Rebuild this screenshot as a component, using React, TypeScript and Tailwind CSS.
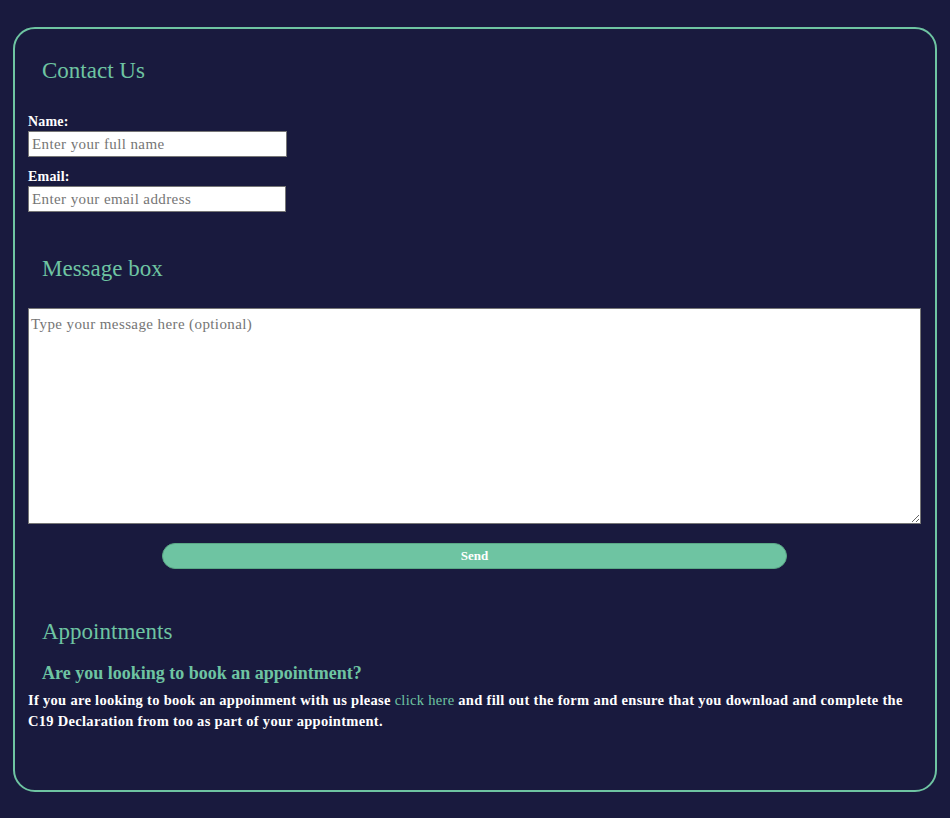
import React from "react";

export default function App() {
  const font = { fontFamily: '"Liberation Serif", "DejaVu Serif", serif' };
  return (
    <div className="min-h-[818px] w-full bg-[#191a3e] pt-[27px] pb-[27px] px-[13px]" style={font}>
      <div className="border-2 border-[#6ec4a2] rounded-[22px] pl-[13px] pr-[14px] pt-[28px] pb-[58px]">
        <h2 className="pl-[14px] text-[23px] leading-[28px] text-[#6ec4a2]">Contact Us</h2>
        <form className="flex flex-col" onSubmit={(e) => e.preventDefault()}>
          <label className="mt-[28px] text-[14px] leading-[18px] font-bold text-white tracking-[0.2px]">Name:</label>
          <input
            className="w-[259px] h-[26px] bg-white border border-[#767676] px-[3px] text-[15px] tracking-[0.4px] text-black placeholder:text-[#757575]"
            placeholder="Enter your full name"
            style={font}
          />
          <label className="mt-[11px] text-[14px] leading-[18px] font-bold text-white tracking-[0.2px]">Email:</label>
          <input
            className="w-[258px] h-[26px] bg-white border border-[#767676] px-[3px] text-[15px] tracking-[0.4px] text-black placeholder:text-[#757575]"
            placeholder="Enter your email address"
            style={font}
          />
          <h2 className="mt-[43px] pl-[14px] text-[23px] leading-[28px] text-[#6ec4a2]">Message box</h2>
          <textarea
            className="mt-[25px] w-full h-[216px] bg-white border border-[#767676] px-[2px] py-[4px] text-[15px] tracking-[0.4px] text-black placeholder:text-[#757575]"
            placeholder="Type your message here (optional)"
            style={font}
          />
          <button
            type="submit"
            className="mt-[19px] mx-auto w-[70%] h-[26px] rounded-full bg-[#6ec4a2] border border-[#5aa886] text-white text-[13px] font-bold"
            style={font}
          >
            Send
          </button>
        </form>
        <h2 className="mt-[49px] pl-[14px] text-[23px] leading-[28px] text-[#6ec4a2]">Appointments</h2>
        <h3 className="mt-[16px] pl-[14px] text-[18px] leading-[22px] font-bold text-[#6ec4a2]">
          Are you looking to book an appointment?
        </h3>
        <p className="mt-[6px] text-[14.5px] leading-[21px] font-bold text-white tracking-[0.3px]">
          If you are looking to book an appoinment with us please{" "}
          <a href="#" className="text-[#6ec4a2] font-normal">click here</a> and fill out the form and ensure that you
          download and complete the C19 Declaration from too as part of your appointment.
        </p>
      </div>
    </div>
  );
}
